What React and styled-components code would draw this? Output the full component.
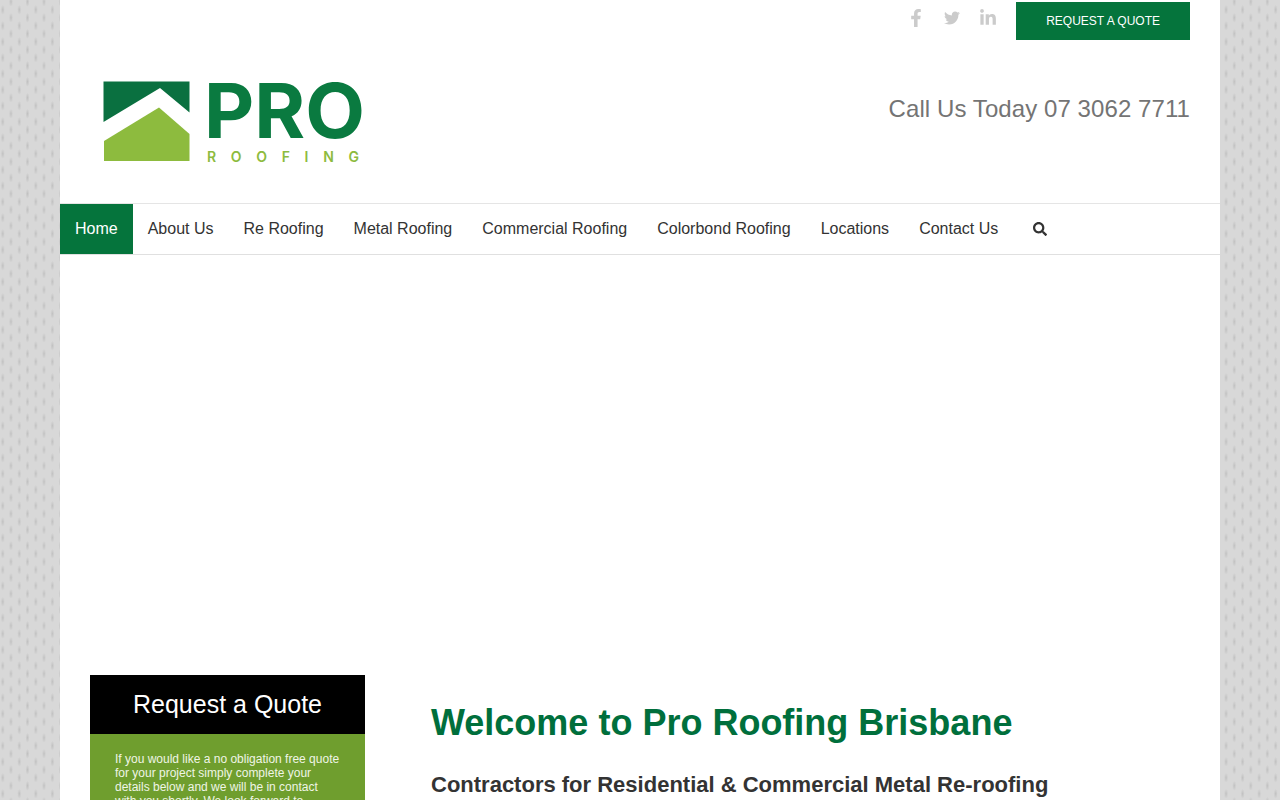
import React from "react";
import styled, { createGlobalStyle } from "styled-components";
import { FaFacebookF, FaTwitter, FaLinkedinIn, FaSearch } from "react-icons/fa";

const GlobalStyle = createGlobalStyle`
  html, body {
    margin: 0;
    height: 100%;
    overflow: hidden;
  }
  body {
    font-family: "Liberation Sans", Arial, sans-serif;
    color: #333;
    background-color: #d8d8d8;
  }
`;

const Backdrop = styled.div`
  height: 100vh;
  overflow: hidden;
  background-color: #d8d8d8;
  background-image:
    radial-gradient(ellipse 2px 5px at 50% 30%, #c0c0c0, rgba(216, 216, 216, 0)),
    radial-gradient(ellipse 2px 5px at 50% 30%, #c0c0c0, rgba(216, 216, 216, 0));
  background-size: 16.54px 16px;
  background-position: 2.7px -3px, -5.5px 5px;
`;

const Page = styled.div`
  width: 1160px;
  height: 100vh;
  margin: 0 auto;
  background: #fff;
`;

const TopBar = styled.div`
  display: flex;
  justify-content: flex-end;
  align-items: flex-start;
  height: 40px;
  padding: 2px 30px 0 0;
`;

const SocialLink = styled.a`
  display: flex;
  justify-content: center;
  align-items: center;
  width: 36px;
  height: 32px;
  font-size: ${(p) => p.$size || 18}px;
  color: #cbcbcb;
`;

const QuoteButton = styled.a`
  margin-left: 10px;
  padding: 0 30px;
  height: 38px;
  line-height: 38px;
  font-size: 12px;
  color: #fff;
  background: #05743c;
`;

const Header = styled.header`
  display: flex;
  justify-content: space-between;
  align-items: flex-start;
  padding: 18px 30px 23px 20px;
`;

const Logo = styled.svg`
  display: block;
  width: 300px;
  height: 120px;
`;

const Phone = styled.div`
  margin-top: 35px;
  font-size: 24px;
  line-height: 28px;
  letter-spacing: 0.08px;
  color: #747474;
`;

const Nav = styled.nav`
  display: flex;
  align-items: stretch;
  height: 50px;
  border-top: 1px solid #e5e5e5;
  border-bottom: 1px solid #e0e0e0;
`;

const NavItem = styled.a`
  padding: 0 15px;
  line-height: 50px;
  font-size: 16px;
  color: ${(p) => (p.$active ? "#fff" : "#333")};
  background: ${(p) => (p.$active ? "#05743c" : "transparent")};
`;

const SearchButton = styled.a`
  display: flex;
  align-items: center;
  padding: 0 20px;
  font-size: 14px;
  color: #333;
`;

const Hero = styled.div`
  height: 420px;
`;

const Content = styled.div`
  display: grid;
  grid-template-columns: 275px 1fr;
  column-gap: 66px;
  padding: 0 30px;
`;

const QuoteCard = styled.aside`
  background: #6f9e2e;
`;

const QuoteTitle = styled.div`
  height: 59px;
  line-height: 59px;
  text-align: center;
  font-size: 25px;
  color: #fff;
  background: #000;
`;

const QuoteText = styled.p`
  margin: 0;
  padding: 18px 25px;
  font-size: 12px;
  line-height: 14px;
  color: #f0f5e6;
`;

const Main = styled.main`
  padding-top: 26px;
`;

const Title = styled.h1`
  margin: 0;
  font-size: 36px;
  line-height: 44px;
  font-weight: 700;
  color: #006f3c;
`;

const Subtitle = styled.h2`
  margin: 25px 0 0;
  font-size: 22px;
  line-height: 30px;
  font-weight: 700;
  color: #333;
`;

const navItems = [
  "Home",
  "About Us",
  "Re Roofing",
  "Metal Roofing",
  "Commercial Roofing",
  "Colorbond Roofing",
  "Locations",
  "Contact Us",
];

function ProLogo() {
  return (
    <Logo viewBox="0 0 300 120" role="img" aria-label="Pro Roofing">
      <polygon points="23.5,21.5 109.5,21.5 109.5,52.5 80,28 23.5,62" fill="#0a7040" />
      <polygon points="24,81 79,47.5 109.5,74 109.5,101 24,101" fill="#8dbb3e" />
      <text
        x="124"
        y="78"
        fontFamily="Inter, sans-serif"
        fontWeight="700"
        fontSize="76"
        textLength="161"
        lengthAdjust="spacingAndGlyphs"
        fill="#0a7a40"
      >
        PRO
      </text>
      <text
        x="127"
        y="101.5"
        fontFamily="Inter, sans-serif"
        fontWeight="600"
        fontSize="14"
        textLength="152"
        fill="#8dbb3e"
      >
        ROOFING
      </text>
    </Logo>
  );
}

export default function App() {
  return (
    <Backdrop>
      <GlobalStyle />
      <Page>
        <TopBar>
          <SocialLink><FaFacebookF /></SocialLink>
          <SocialLink $size={16}><FaTwitter /></SocialLink>
          <SocialLink><FaLinkedinIn /></SocialLink>
          <QuoteButton>REQUEST A QUOTE</QuoteButton>
        </TopBar>
        <Header>
          <ProLogo />
          <Phone>Call Us Today 07 3062 7711</Phone>
        </Header>
        <Nav>
          {navItems.map((item, i) => (
            <NavItem key={item} $active={i === 0}>{item}</NavItem>
          ))}
          <SearchButton><FaSearch /></SearchButton>
        </Nav>
        <Hero />
        <Content>
          <QuoteCard>
            <QuoteTitle>Request a Quote</QuoteTitle>
            <QuoteText>
              If you would like a no obligation free quote for your project simply
              complete your details below and we will be in contact with you shortly.
              We look forward to
            </QuoteText>
          </QuoteCard>
          <Main>
            <Title>Welcome to Pro Roofing Brisbane</Title>
            <Subtitle>Contractors for Residential &amp; Commercial Metal Re-roofing</Subtitle>
          </Main>
        </Content>
      </Page>
    </Backdrop>
  );
}
